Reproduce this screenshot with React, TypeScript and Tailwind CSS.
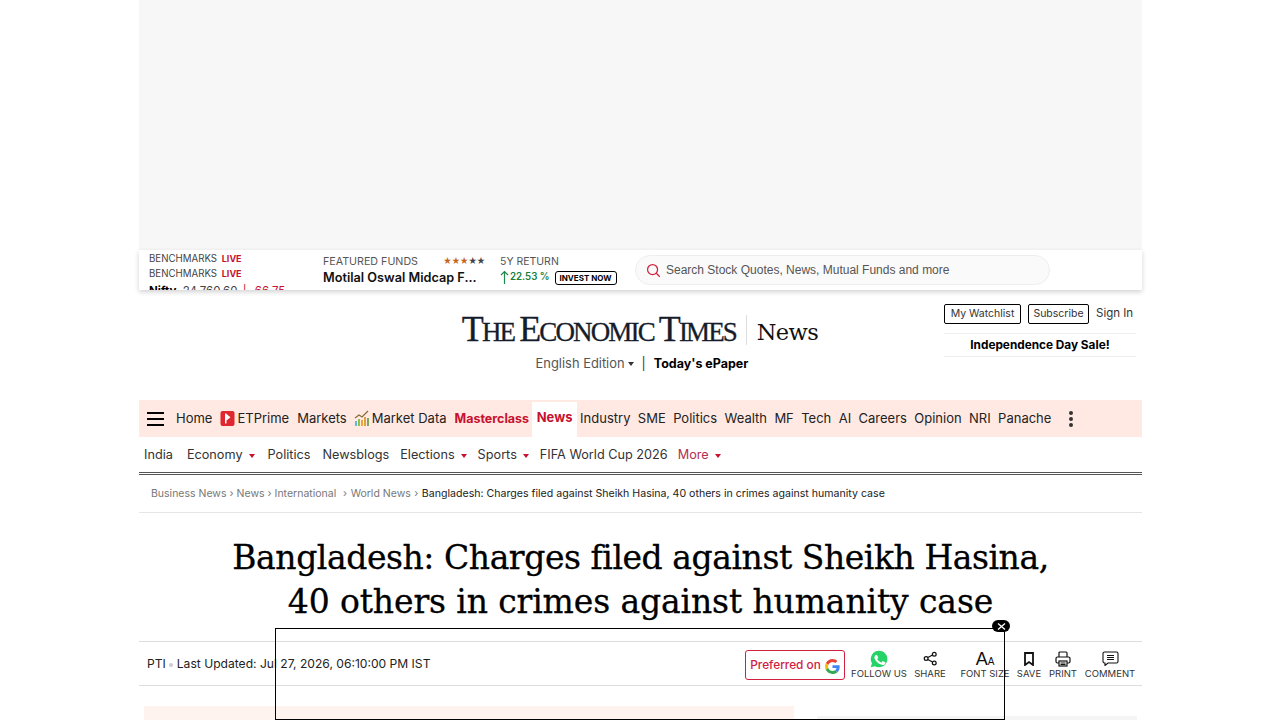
import React from "react";

const sans = "font-['Inter','Liberation_Sans',sans-serif]";

function Caret({ c = "border-t-[#c7112f]", ml = "ml-[6px]" }: { c?: string; ml?: string }) {
  return <span className={`inline-block w-0 h-0 border-x-[3px] border-x-transparent border-t-[4px] align-middle ${c} ${ml}`} />;
}

function GoogleG({ size = 15 }: { size?: number }) {
  return (
    <svg width={size} height={size} viewBox="0 0 48 48">
      <path fill="#EA4335" d="M24 9.5c3.5 0 6.6 1.2 9.1 3.6l6.8-6.8C35.8 2.4 30.3 0 24 0 14.6 0 6.5 5.4 2.6 13.2l7.9 6.1C12.4 13.7 17.7 9.5 24 9.5z" />
      <path fill="#4285F4" d="M46.9 24.5c0-1.6-.1-3.1-.4-4.5H24v9h12.9c-.6 3-2.2 5.5-4.8 7.2l7.7 6c4.5-4.2 7.1-10.3 7.1-17.7z" />
      <path fill="#FBBC05" d="M10.5 28.7c-.5-1.4-.8-3-.8-4.7s.3-3.3.8-4.7l-7.9-6.1C.9 16.5 0 20.1 0 24s.9 7.5 2.6 10.8l7.9-6.1z" />
      <path fill="#34A853" d="M24 48c6.5 0 11.9-2.1 15.9-5.8l-7.7-6c-2.1 1.4-4.9 2.3-8.2 2.3-6.3 0-11.6-4.2-13.5-9.9l-7.9 6.1C6.5 42.6 14.6 48 24 48z" />
    </svg>
  );
}

function Tool({ label, w, children }: { label: string; w: string; children: React.ReactNode }) {
  return (
    <div className={`flex flex-col items-center ${w}`}>
      <div className="h-[18px] flex items-center justify-center">{children}</div>
      <span className="text-[9.5px] leading-[12px] text-[#333] whitespace-nowrap">{label}</span>
    </div>
  );
}

export default function App() {
  const nav1 = ["SME", "Politics", "Wealth", "MF", "Tech", "AI", "Careers", "Opinion", "NRI", "Panache"];
  return (
    <div className={`w-[1280px] h-[720px] overflow-hidden bg-white text-black ${sans}`}>
      <div className="w-[1003px] ml-[139px] relative">
        <div className="h-[250px] bg-[#f7f7f7]" />

        {/* top strip */}
        <div className="h-[40px] bg-white shadow-[0_2px_5px_rgba(0,0,0,0.18)] flex relative z-10">
          <div className="w-[184px] pl-[10px] h-[40px] overflow-hidden text-[9.7px] leading-[15px] pt-[1px] text-[#444]">
            <div className="whitespace-nowrap">BENCHMARKS <b className="text-[#c7112f] ml-[2px] text-[9px]">LIVE</b></div>
            <div className="whitespace-nowrap">BENCHMARKS <b className="text-[#c7112f] ml-[2px] text-[9px]">LIVE</b></div>
            <div className="whitespace-nowrap text-[11.5px] mt-[3px]"><b className="text-black">Nifty</b><span className="ml-[3px]"> 24,760.60</span> <span className="text-[#c7112f] ml-[2px]">|</span><span className="text-[#c7112f] ml-[3px]">-66.75</span></div>
          </div>
          <div className="w-[162px] pt-[5px]">
            <div className="flex justify-between items-center text-[10.7px] leading-[13px] text-[#555]">
              <span>FEATURED FUNDS</span>
              <span className="text-[8.5px] tracking-[-0.5px]"><span className="text-[#c4651d]">★★★</span><span className="text-[#444]">★★</span></span>
            </div>
            <div className="text-[12.7px] leading-[18px] font-semibold mt-[1px] whitespace-nowrap text-[#111]">Motilal Oswal Midcap F...</div>
          </div>
          <div className="w-[150px] pl-[15px] pt-[5px]">
            <div className="text-[10.5px] leading-[13px] text-[#555]">5Y RETURN</div>
            <div className="flex items-center mt-[2px]">
              <svg width="9" height="15" viewBox="0 0 9 15" fill="none" stroke="#1d8a4e" strokeWidth="1.2"><path d="M4.5 14V1.5M1 5l3.5-3.500L8 5" /></svg>
              <span className="text-[9.7px] font-semibold text-[#16803c] ml-[1px] whitespace-nowrap">22.53 %</span>
              <span className="ml-[5px] px-[4px] h-[14px] leading-[12px] border border-black rounded-[3px] text-[8px] font-bold whitespace-nowrap">INVEST NOW</span>
            </div>
          </div>
          <div className="mt-[5px] w-[415px] h-[30px] rounded-full bg-[#fafafa] border border-[#eeeeee] flex items-center pl-[10px]">
            <svg width="15" height="15" viewBox="0 0 24 24" fill="none" stroke="#d0213f" strokeWidth="2"><circle cx="10.5" cy="10.5" r="8" /><path d="M16.5 16.500L22 22" /></svg>
            <span className="font-['Liberation_Sans',sans-serif] text-[12px] text-[#555] ml-[5px]">Search Stock Quotes, News, Mutual Funds and more</span>
          </div>
        </div>

        {/* masthead */}
        <div className="h-[110px] relative flex flex-col items-center">
          <div className="flex items-center mt-[24px] h-[32px] -ml-[1px]">
            <span className="font-['Liberation_Serif',serif] text-[#151c2c] whitespace-nowrap text-[27px] leading-[32px] tracking-[-1.85px] w-[274px] [-webkit-text-stroke:0.3px_#151c2c]">
              <span className="text-[36px]">T</span>HE <span className="text-[36px]">E</span>CONOMIC <span className="text-[36px]">T</span>IMES
            </span>
            <span className="w-px h-[30px] bg-[#ddd] ml-[10px]" />
            <span className="font-['DejaVu_Serif',serif] text-[22.5px] ml-[10px] tracking-[-0.6px] leading-[32px] text-[#111] mt-[3px]">News</span>
          </div>
          <div className="mt-[10px] leading-[16px] flex items-center ml-[3px] text-[#555]">
            <span className="text-[12.9px]">English Edition</span>
            <Caret c="border-t-[#333]" ml="ml-[3px]" />
            <span className="mx-[8px] text-[12.5px] text-[#333]">|</span>
            <span className="font-bold text-black text-[12.5px]">Today's ePaper</span>
          </div>
          <div className="absolute left-[805px] top-[14px] w-[192px]">
            <div className="flex items-center text-[10.5px] text-[#333]">
              <span className="h-[20px] w-[77px] border border-black rounded-[2px] flex items-center justify-center whitespace-nowrap">My Watchlist</span>
              <span className="h-[20px] w-[61px] ml-[7px] border border-black rounded-[2px] flex items-center justify-center">Subscribe</span>
              <span className="ml-[7px] text-[11.5px] whitespace-nowrap">Sign In</span>
            </div>
            <div className="mt-[9px] h-[24px] border-y border-[#eee] text-[11.8px] font-bold flex items-center justify-center whitespace-nowrap pt-[2px]">Independence Day Sale!</div>
          </div>
        </div>

        {/* nav 1 */}
        <div className="h-[37px] bg-[#ffe9e2] flex items-center text-[13px] text-[#222] whitespace-nowrap">
          <div className="ml-[8px] w-[17px] flex flex-col gap-[4px]">
            <span className="h-[2px] bg-black" />
            <span className="h-[2px] bg-black" />
            <span className="h-[2px] bg-black" />
          </div>
          <span className="ml-[12px]">Home</span>
          <svg className="ml-[8px]" width="15" height="15" viewBox="0 0 14 15">
            <rect width="14" height="15" rx="2" fill="#e0262e" />
            <path d="M4.5 2.5h1.500v10H4.500z M6 3l4 3.200-4 3.200z" fill="#fff" />
          </svg>
          <span className="ml-[2px]">ETPrime</span>
          <span className="ml-[8px]">Markets</span>
          <svg className="ml-[7px]" width="16" height="17" viewBox="0 0 16 17">
            <rect x="1" y="11" width="2" height="5" fill="#66b8d8" />
            <rect x="4" y="9" width="2" height="7" fill="#8bc34a" />
            <rect x="7" y="10" width="2" height="6" fill="#f2a33a" />
            <rect x="10" y="7" width="2" height="9" fill="#d9a441" />
            <rect x="13" y="8" width="2" height="8" fill="#7aa864" />
            <path d="M1 8l4-3 3 2 6-6" fill="none" stroke="#8a6d3b" strokeWidth="1.3" />
          </svg>
          <span className="ml-[2px]">Market Data</span>
          <span className="ml-[8px] mt-[1px] font-bold text-[12.5px] text-[#c7112f]">Masterclass</span>
          <span className="ml-[3px] w-[45px] h-[35px] mt-[2px] self-start bg-white text-[#c7112f] font-bold flex items-center justify-center"><span className="-mt-[3px]">News</span></span>
          <span className="ml-[3px]">Industry</span>
          {nav1.map((n) => (
            <span key={n} className="ml-[7.4px]">{n}</span>
          ))}
          <span className="ml-[18px] flex flex-col gap-[2px]">
            <i className="w-[4px] h-[4px] rounded-full bg-[#333]" />
            <i className="w-[4px] h-[4px] rounded-full bg-[#333]" />
            <i className="w-[4px] h-[4px] rounded-full bg-[#333]" />
          </span>
        </div>

        {/* nav 2 */}
        <div className="h-[35px] border-b-[3px] border-double border-[#555] box-content flex items-center text-[12.7px] text-[#333] whitespace-nowrap pl-[5px]">
          <span>India</span>
          <span className="ml-[14px]">Economy<Caret /></span>
          <span className="ml-[13px]">Politics</span>
          <span className="ml-[12px]">Newsblogs</span>
          <span className="ml-[11px]">Elections<Caret /></span>
          <span className="ml-[11px]">Sports<Caret /></span>
          <span className="ml-[11px]">FIFA World Cup 2026</span>
          <span className="ml-[10px] text-[#b5304e]">More<Caret /></span>
        </div>

        {/* breadcrumb */}
        <div className="h-[38px] border-b border-[#e6e6e6] flex items-center pl-[12px] text-[10.5px] text-[#777] whitespace-nowrap">
          <span>Business News</span><span className="mx-[3px]">›</span>
          <span>News</span><span className="mx-[3px]">›</span>
          <span className="w-[65px]">International</span><span className="mx-[3.5px]">›</span>
          <span>World News</span><span className="mx-[3.5px]">›</span>
          <span className="text-[#222] text-[10.6px]">Bangladesh: Charges filed against Sheikh Hasina, 40 others in crimes against humanity case</span>
        </div>

        {/* headline */}
        <h1 className="h-[128px] pt-[23px] font-['DejaVu_Serif',serif] text-[33px] leading-[44px] text-center text-black [-webkit-text-stroke:0.3px_#000]">
          <span className="block tracking-[-0.44px]">Bangladesh: Charges filed against Sheikh Hasina,</span>
          <span className="block tracking-[-0.12px]">40 others in crimes against humanity case</span>
        </h1>

        {/* byline */}
        <div className="h-[41px] pt-[2px] border-y border-[#ddd] box-content flex items-center text-[12.1px] text-[#222] pl-[8px] whitespace-nowrap">
          <span>PTI</span>
          <span className="w-[4px] h-[4px] rounded-full bg-[#ccc] mx-[3.5px]" />
          <span>Last Updated: Jul 27, 2026, 06:10:00 PM IST</span>
          <div className="ml-auto flex items-center">
            <div className="w-[100px] h-[30px] pt-[3px] border border-[#d0213f] rounded-[3px] flex items-center justify-center text-[#d0213f] text-[11.8px] font-medium">
              Preferred on<span className="ml-[4px]"><GoogleG /></span>
            </div>
            <Tool label="FOLLOW US" w="w-[56px] ml-[6px]">
              <svg width="18" height="18" viewBox="0 0 24 24">
                <path fill="#25d366" d="M12 1a11 11 0 0 0-9.400 16.600L1 23l5.600-1.500A11 11 0 1 0 12 1z" />
                <path fill="#fff" d="M8.300 6.500c-.300 0-.800.100-1.100.500-.400.500-1.300 1.300-1.300 3s1.300 3.400 1.500 3.600c.200.300 2.500 4 6.200 5.400 3 1.200 3.600.900 4.300.900.700-.100 2.100-.900 2.400-1.700.300-.800.300-1.500.200-1.700-.100-.100-.300-.200-.700-.400l-2.400-1.200c-.300-.100-.600-.200-.800.200l-1.100 1.400c-.200.200-.400.300-.800.100-.400-.200-1.500-.600-2.900-1.800-1.100-1-1.800-2.200-2-2.500-.200-.400 0-.600.200-.800l.500-.600c.200-.200.200-.400.400-.600.100-.200.100-.500 0-.700L9.600 7.200c-.300-.700-.600-.700-.800-.700h-.500z" />
              </svg>
            </Tool>
            <Tool label="SHARE" w="w-[46px] ml-[0px]">
              <svg width="15" height="15" viewBox="0 0 24 24" fill="none" stroke="#111" strokeWidth="2">
                <circle cx="18" cy="5" r="3" /><circle cx="5" cy="12" r="3" /><circle cx="18" cy="19" r="3" />
                <path d="M7.700 10.500l7.600-4M7.700 13.500l7.600 4" />
              </svg>
            </Tool>
            <Tool label="FONT SIZE" w="w-[56px] ml-[4px]">
              <span className="font-['Liberation_Sans',sans-serif] text-[#111] leading-none"><span className="text-[18px]">A</span><span className="text-[10px]">A</span></span>
            </Tool>
            <Tool label="SAVE" w="w-[32px]">
              <svg width="10" height="14" viewBox="0 0 10 14" fill="none" stroke="#111" strokeWidth="1.800"><path d="M1 1h8v12L5 10l-4 3z" /></svg>
            </Tool>
            <Tool label="PRINT" w="w-[36px]">
              <svg width="16" height="16" viewBox="0 0 16 16" fill="none" stroke="#111" strokeWidth="1.200">
                <path d="M4 6V2a1 1 0 0 1 1-1h6a1 1 0 0 1 1 1v4" />
                <rect x="1" y="6" width="14" height="6" rx="1.500" />
                <rect x="4" y="10" width="8" height="5" fill="#fff" />
                <path d="M5.500 12h5M5.500 13.500h5" />
              </svg>
            </Tool>
            <Tool label="COMMENT" w="w-[52px] ml-[3px] mr-[6px]">
              <svg width="17" height="15" viewBox="0 0 17 15" fill="none" stroke="#111" strokeWidth="1.100">
                <path d="M2.500 1h12A1.500 1.500 0 0 1 16 2.500v8a1.500 1.500 0 0 1-1.500 1.500H6l-3 2.500V12h-.5A1.500 1.500 0 0 1 1 10.500v-8A1.500 1.500 0 0 1 2.500 1z" />
                <path d="M5 4.500h7M5 6.500h7M5 8.500h7" />
              </svg>
            </Tool>
          </div>
        </div>

        {/* below */}
        <div className="flex mt-[20px]">
          <div className="ml-[5px] w-[650px] h-[20px] bg-[#fff3ef]" />
          <div className="ml-[23px] mt-[10px] w-[320px] h-[10px] bg-[#f5f5f5]" />
        </div>

        {/* overlay ad frame */}
        <div className="absolute left-[136px] top-[628px] w-[730px] h-[92px] border border-black">
          <span className="absolute -right-[6px] -top-[9px] w-[18px] h-[12px] rounded-full bg-black flex items-center justify-center">
            <svg width="9" height="7" viewBox="0 0 9 7" stroke="#fff" strokeWidth="1.300"><path d="M1 .5l7 6M8 .5l-7 6" /></svg>
          </span>
        </div>
      </div>
    </div>
  );
}
